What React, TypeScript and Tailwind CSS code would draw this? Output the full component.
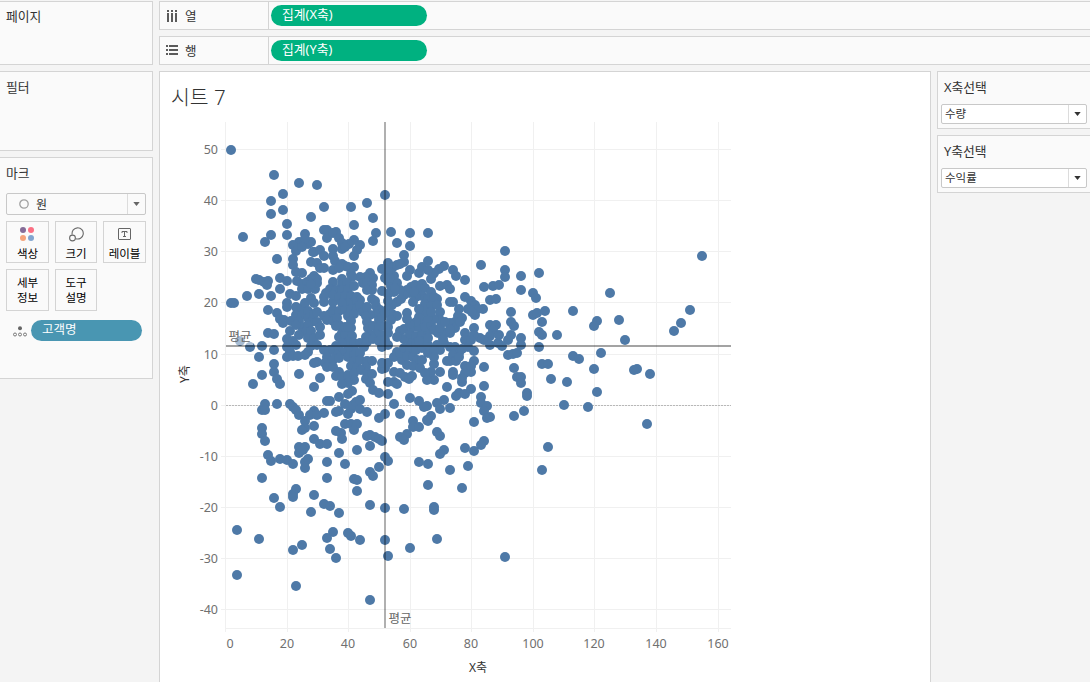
import React from 'react';
import { clsx } from 'clsx';

interface SelectBoxProps {
  label: string;
  value: string;
}

// Marks, written as "x,y" in chart canvas coordinates
const OUTER_MARKS = `
231,150 274,175 299,183 283,194 271,201 271,214 283,210 287,224 311,217 243,237 271,235 265,242 287,235 305,234
317,185 324,207 351,207 367,203 385,195 354,225 373,218 376,233 373,241 391,232 410,233 428,233 397,243 410,246
277,259 256,279 259,280 264,282 268,281 267,285 280,278 280,289 247,296 259,294 271,296 231,303 234,303 268,310
268,333 274,334 240,341 250,347 262,346 274,350 259,357 274,364 274,372 277,379 280,384 262,375 253,384
265,404 262,410 265,410 277,404 262,428 262,434 265,441 268,455 271,461 280,459 287,460 293,464 262,478 274,498
280,507 296,489 293,494 293,497 314,495 311,512 324,504 330,506 339,513 305,468 305,462 308,459 327,462 327,478
345,464 354,479 357,480 357,491 370,472 373,476 379,467 385,457 388,461 370,505 385,508 404,509 434,507 434,510
437,539 410,548 385,540 388,556 360,540 351,536 348,533 333,532 327,538 330,549 336,558 302,545 293,550 259,539
237,530 237,575 296,586 370,600 505,557 702,256 690,310 681,323 674,331 650,374 647,424 637,369 634,370 610,293
619,320 625,340 597,321 594,326 573,311 573,356 579,359 601,353 594,369 597,392 588,407 564,405 567,382 551,379
557,335 548,447 542,470 462,488 428,485 428,464 419,462 450,470 468,466`;

const RIGHT_MARKS = `
505,251 481,265 505,270 505,277 521,276 539,273 484,287 493,286 499,285 521,290 533,293 536,298 490,300 496,299
471,301 465,297 475,305 468,309 459,309 483,309 478,309 475,315 472,312 511,312 533,315 537,313 545,311 542,322 511,322
514,326 490,325 496,325 493,330 499,335 490,336 484,340 480,338 474,328 474,335 465,333 465,340 471,340 511,335 508,340
521,338 521,345 539,332 542,335 539,347 502,346 498,343 508,355 513,354 517,353 490,345 542,364 548,364 514,368
517,377 521,377 521,383 527,393 527,396 524,411 514,416 474,351 474,361 484,367 484,386 465,366 471,372 465,373
471,366 462,382 462,378 453,372 453,375 447,387 456,396 459,393 465,394 471,389 481,397 481,403 487,406 484,411
487,418 490,417 474,422 450,408 444,400 437,403 440,409 427,406 424,407 431,416 428,421 437,432 440,436 444,450
440,454 484,441 481,445 465,448 474,451 453,270 456,276 465,280 444,266 439,269 433,274 431,279 440,286 447,285
450,289 450,302 453,302 437,299 434,304 440,312 440,320 462,318 458,316 455,322 450,323 455,328 450,333 445,333 438,333
440,350 444,343 450,347 455,347 459,353 453,355 450,361 456,361 459,357 462,349 468,347 447,361 437,345
450,329 460,322 434,364 440,372 428,378 434,380 431,372`;

const UPPER_MARKS = `
299,242 293,245 296,251 308,244 311,242 314,252 293,259 311,262 293,265 296,272 302,273 287,281 290,294 296,296
287,303 287,307 296,307 305,239 302,247 324,230 327,230 336,232 327,238 333,233 339,238 342,243 342,249
354,240 349,244 345,247 360,245 357,250 354,256 333,249 313,252 320,250 324,256 333,256 335,261 317,263 320,268
324,268 333,270 342,264 345,266 348,267 354,267 351,274 339,268 388,263 382,269 385,269 393,267 397,265
404,255 404,262 400,264 390,272 410,270 407,276 419,273 422,267 428,261 434,273 370,273 366,277 360,277 373,278
352,277 342,279 333,282 342,285 347,283 314,276 317,279 311,279 297,281 302,284 307,282 302,289 308,289
315,289 317,283 311,284 311,298 314,303 324,297 326,293 330,289 336,290 342,290 348,289 354,286
363,283 367,282 372,285 372,290 367,290 382,291 388,281 394,276 391,286 397,283 394,292 388,294 411,287 415,285
422,284 419,290 425,288 431,292 422,296 428,298 410,293 407,290 416,297 434,297 425,304 431,306 437,305 413,302
404,295 400,290 388,272 385,278 390,278 395,288 428,270 414,292`;

const CORE_MARKS = `
277,313 280,319 284,320 283,323 290,331 287,339 291,321 296,315 302,308 305,303 302,315 308,311 308,318 311,322
314,314 299,321 302,327 296,325 308,325 305,332 299,335 293,341 296,345 287,347 290,352 287,357 293,356 298,356
308,338 311,331 317,322 320,327 314,338 311,346 308,352 305,355 317,345 320,335 317,312
324,302 333,302 333,295 339,297 345,296 351,296 357,297 360,300 354,302 348,303 342,303 324,316
330,314 333,310 339,311 345,310 351,309 357,308 360,305 327,320 333,321 337,318 348,316 354,314 351,321
339,325 342,333 336,326 339,337 345,335 351,328 363,312 367,307
372,299 375,301 376,306 380,310 376,314 370,315 366,316 367,322 368,328 373,326 379,320 379,327 382,317 385,326
388,327 388,333 382,335 376,334 370,335 366,337 352,336 348,342 342,343 336,346 354,343
360,343 367,342 373,339 379,341 385,340 388,345 382,347 364,347 354,349 348,350 342,352 336,354 330,350 324,350
327,357 333,360 317,362 314,363 325,363 327,367 333,367 339,358 348,357 354,355 360,353 354,361 351,366
357,367 339,372 336,376 342,377 348,375 354,373 354,380 348,383 342,384 352,391 348,394 360,360
367,361 372,361 366,367 361,370 367,373 366,379 372,374 370,383 373,390 379,393 382,369 385,368 388,363
382,363 388,382 394,382 397,384 388,394 394,372 400,373 405,377 409,379 412,376 394,357 397,352 402,360 407,365
400,353 404,348 410,349 407,356 413,357 417,360 413,366 420,368 425,373 427,380 422,360 416,350 410,342 404,339
400,331 397,337 404,329 410,334 413,327 416,336 422,333 428,331 419,327 422,322 425,327 431,325 434,319
428,318 425,312 419,317 416,322 410,324 407,313 407,319 419,309 431,312 397,302 392,305 388,301
388,309 392,314 397,316 385,313 401,299 425,341 422,348 428,345 428,353 434,351 434,330 440,328
434,357 416,343 443,339 445,322 428,338 419,341 391,320 299,374 320,378 314,387 345,327 348,327`;

const LOWER_MARKS = `
290,404 293,407 296,410 299,415 314,411 324,413 310,415 317,415 305,421 305,428 302,430 314,426 314,439 320,444
327,444 299,447 305,447 299,453 303,450 327,401 330,401 339,397 345,404 336,412 339,411 348,414 351,409 353,405
356,402 360,400 360,409 367,412 379,418 385,414 400,414 394,404 410,398 419,401 413,421 413,427 419,427 427,420
407,434 400,437 404,440 345,424 351,424 357,424 354,430 336,431 341,433 342,439 370,435 375,437 379,439 382,441
367,436 370,446 357,450 339,453`;

const MARKS = [OUTER_MARKS, RIGHT_MARKS, UPPER_MARKS, CORE_MARKS, LOWER_MARKS]
  .join(' ')
  .trim()
  .split(/\s+/)
  .map(pair => pair.split(',').map(Number));

const X_TICKS = [0, 20, 40, 60, 80, 100, 120, 140, 160];
const Y_TICKS = [50, 40, 30, 20, 10, 0, -10, -20, -30, -40];

const xPos = (v: number) => Math.round(225.1 + v * 3.078) + 0.5;
const yPos = (v: number) => Math.round(404.6 - v * 5.11) + 0.5;

const ScatterChart: React.FC = () => (
  <svg width="770" height="562" viewBox="160 120 770 562" className="block">
    {/* Grid */}
    <g stroke="#f0f0f0" strokeWidth="1">
      {X_TICKS.map(v => <line key={v} x1={xPos(v)} x2={xPos(v)} y1="122" y2="632" />)}
      {Y_TICKS.map(v => <line key={v} x1="221" x2="731" y1={yPos(v)} y2={yPos(v)} />)}
      <line x1="225" x2="731" y1="628.5" y2="628.5" />
    </g>
    <line x1="226" x2="731" y1="405.5" y2="405.5" stroke="#b8b8b8" strokeDasharray="2 1" />

    {/* Axis labels */}
    <g fill="#707070" fontSize="12.5">
      {Y_TICKS.map(v => <text key={v} x="218" y={yPos(v) + 4} textAnchor="end">{v}</text>)}
      {X_TICKS.map(v => <text key={v} x={v === 0 ? 230 : xPos(v) - 0.5} y="648" textAnchor="middle">{v}</text>)}
    </g>
    <g fill="#333333" fontSize="12">
      <text x="478" y="672" textAnchor="middle">X축</text>
      <text transform="translate(188.5 374) rotate(-90)" textAnchor="middle">Y축</text>
    </g>

    <g fill="#4e79a7">
      {MARKS.map(([x, y], i) => <circle key={i} cx={x} cy={y} r="5" />)}
    </g>

    {/* Average lines */}
    <rect x="228" y="329" width="25" height="16" fill="#ffffff" fillOpacity="0.5" />
    <rect x="384" y="122" width="2" height="506" fill="#000000" fillOpacity="0.31" />
    <rect x="226" y="345" width="505" height="2" fill="#000000" fillOpacity="0.36" />
    <g fill="#666666" fontSize="12.5">
      <text x="228.5" y="341">평균</text>
      <text x="388.5" y="623">평균</text>
    </g>
  </svg>
);

const Caret: React.FC<{ className?: string }> = ({ className }) => (
  <svg viewBox="0 0 8 5" className={clsx('w-[7px] h-1', className)}>
    <path d="M0 0h8L4 5z" fill="currentColor" />
  </svg>
);

const SelectBox: React.FC<SelectBoxProps> = ({ label, value }) => (
  <div className="h-[58px] border border-r-0 border-[#d4d4d4] bg-[#fafafa] pl-[3px] pt-1.5">
    <div className="pl-[3px] h-[26px] text-[12.8px] leading-[18px]">{label}</div>
    <div className="flex w-[146px] h-5 border border-[#c8c8c8] rounded-[2px] bg-white">
      <div className="flex-1 pl-[3px] text-[11.5px] leading-[18px]">{value}</div>
      <div className="w-[18px] border-l border-[#dcdcdc] flex items-center justify-center">
        <Caret />
      </div>
    </div>
  </div>
);

const Shelf: React.FC<{ icon: React.ReactNode; name: string; pill: string }> = ({ icon, name, pill }) => (
  <div className="flex h-[29px] border border-r-0 border-[#d4d4d4] bg-[#fafafa]">
    <div className="w-[109px] border-r border-[#d4d4d4] flex items-center pl-1.5">
      {icon}
      <span className="ml-[7px] mt-0.5 text-[12.5px] leading-[18px]">{name}</span>
    </div>
    <div className="ml-0.5 mt-[3px] w-[156px] h-[21px] rounded-full bg-[#00b180] text-white text-[12.8px] leading-[19px] pl-[11px]">
      {pill}
    </div>
  </div>
);

const CardButton: React.FC<{ className?: string; children: React.ReactNode }> = ({ className, children }) => (
  <div className={clsx('h-[42px] border border-[#d4d4d4] flex flex-col items-center text-[11.5px] text-black', className)}>
    {children}
  </div>
);

const App: React.FC = () => {
  return (
    <div
      className="w-[1090px] h-[682px] overflow-hidden bg-[#f4f4f4] pt-px flex gap-1.5 text-[#333333] whitespace-nowrap font-['Noto_Sans','Noto_Sans_CJK_KR',sans-serif]"
    >
      {/* Left cards */}
      <div className="w-[153px] shrink-0 flex flex-col gap-1.5 text-[12.8px] leading-[18px]">
        <div className="h-16 border border-l-0 border-[#d4d4d4] bg-[#fafafa] pl-1.5 pt-[5px]">페이지</div>
        <div className="h-20 border border-l-0 border-[#d4d4d4] bg-[#fafafa] pl-1.5 pt-1.5">필터</div>
        <div className="h-[222px] border border-l-0 border-[#d4d4d4] bg-[#fafafa] px-1.5 pt-1.5">
          <div className="h-[29px]">마크</div>
          <div className="flex w-[140px] h-[22px] border border-[#c8c8c8] rounded-[2px]">
            <div className="flex-1 flex items-center pl-3 text-[12px]">
              <svg viewBox="0 0 10 10" className="w-2.5 h-2.5 mr-[7px]">
                <circle cx="5" cy="5" r="4.2" fill="none" stroke="#a0a0a0" strokeWidth="1.3" />
              </svg>
              <span className="mt-0.5">원</span>
            </div>
            <div className="w-[18px] border-l border-[#dcdcdc] flex items-center justify-center">
              <Caret className="text-[#666666]" />
            </div>
          </div>

          <div className="mt-1.5 flex gap-1.5">
            <CardButton className="w-[43px]">
              <svg viewBox="0 0 14 14" className="w-3.5 h-3.5 mt-[5px] mr-px">
                <circle cx="3" cy="3" r="3" fill="#856c97" />
                <circle cx="11" cy="3" r="3" fill="#fb6f83" />
                <circle cx="3" cy="11" r="3" fill="#f5a37a" />
                <circle cx="11" cy="11" r="3" fill="#82a5d0" />
              </svg>
              <span className="leading-[16px] mt-[5px]">색상</span>
            </CardButton>
            <CardButton className="w-[42px]">
              <svg viewBox="0 0 15 15" className="w-[15px] h-[15px] mt-[5px]" fill="none" stroke="#6a6a6a" strokeWidth="1.1">
                <path d="M3.2 7.6A5.6 5.6 0 1 1 6.8 11.7" />
                <circle cx="3.5" cy="11" r="2.9" />
              </svg>
              <span className="leading-[16px] mt-1">크기</span>
            </CardButton>
            <CardButton className="w-[43px]">
              <svg viewBox="0 0 13 12" className="w-[13px] h-3 mt-1.5 mr-px" fill="none" stroke="#666666">
                <rect x="0.5" y="0.5" width="12" height="11" rx="0.5" />
                <path d="M4 5V3.5h5V5M6.5 3.5v5M5 8.5h3" />
              </svg>
              <span className="leading-[16px] mt-1.5">레이블</span>
            </CardButton>
          </div>

          <div className="mt-1.5 flex gap-1.5 leading-[15px]">
            <CardButton className="w-[43px] pt-[5px]">
              <span>세부</span>
              <span>정보</span>
            </CardButton>
            <CardButton className="w-[42px] pt-[5px]">
              <span>도구</span>
              <span>설명</span>
            </CardButton>
          </div>

          <div className="mt-[9px] pl-[7px] flex items-center">
            <svg viewBox="0 0 14 11" className="w-3.5 h-[11px] mt-0.5" fill="none" stroke="#777777">
              <circle cx="7" cy="2.2" r="2" fill="#666666" stroke="none" />
              <circle cx="2" cy="8.5" r="1.5" />
              <circle cx="7" cy="8.5" r="1.5" />
              <circle cx="12" cy="8.5" r="1.5" />
            </svg>
            <div className="ml-1 w-[111px] h-[21px] rounded-full bg-[#4996b2] text-white text-[12.5px] leading-[19px] pl-[11px]">고객명</div>
          </div>
        </div>
      </div>

      <div className="flex-1 min-w-0 flex flex-col gap-1.5">
        <Shelf
          name="열"
          pill="집계(X축)"
          icon={
            <svg viewBox="0 0 12 12" className="w-3 h-3" fill="#5a5a5a">
              <path d="M1 0h2v2H1zM5 0h2v2H5zM9 0h2v2H9zM1 3h2v9H1zM5 3h2v9H5zM9 3h2v9H9z" />
            </svg>
          }
        />
        <Shelf
          name="행"
          pill="집계(Y축)"
          icon={
            <svg viewBox="0 0 12 12" className="w-3 h-3 -mt-0.5" fill="#5a5a5a">
              <path d="M0 1h2v2H0zM0 5h2v2H0zM0 9h2v2H0zM3 1h9v2H3zM3 5h9v2H3zM3 9h9v2H3z" />
            </svg>
          }
        />

        <div className="flex-1 min-h-0 flex gap-1.5">
          {/* Sheet */}
          <div className="w-[772px] shrink-0 border border-b-0 border-[#d4d4d4] bg-white overflow-hidden">
            <div className="h-12 pl-[11px] pt-[11px] text-[20.5px] leading-[28px] font-light">시트 7</div>
            <ScatterChart />
          </div>

          {/* Parameters */}
          <div className="flex-1 flex flex-col gap-1.5">
            <SelectBox label="X축선택" value="수량" />
            <SelectBox label="Y축선택" value="수익률" />
          </div>
        </div>
      </div>
    </div>
  );
};

export default App;
